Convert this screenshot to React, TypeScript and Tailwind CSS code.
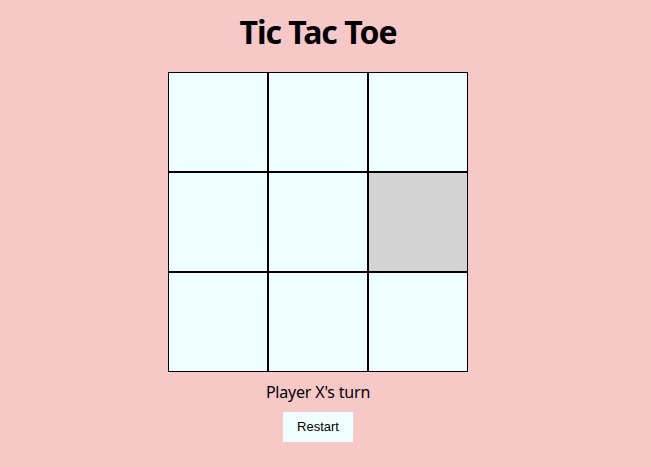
import React from "react";

export default function App() {
  const [board, setBoard] = React.useState<(string | null)[]>(Array(9).fill(null));
  const [player, setPlayer] = React.useState("X");

  const play = (i: number) => {
    if (board[i]) return;
    const next = board.slice();
    next[i] = player;
    setBoard(next);
    setPlayer(player === "X" ? "O" : "X");
  };

  return (
    <div className="min-h-[467px] w-full bg-[#f7c8c8] pr-[15px]">
      <div className="flex flex-col items-center pt-[10px]">
        <h1 className="text-[32px] font-bold leading-[44px] tracking-[-1px] text-black [font-family:'Noto_Sans',sans-serif]">
          Tic Tac Toe
        </h1>
        <div className="mt-[18px] grid grid-cols-[repeat(3,100px)]">
          {board.map((v, i) => (
            <button
              key={i}
              onClick={() => play(i)}
              className={
                "h-[100px] w-[100px] border border-black text-4xl font-bold " +
                (i === 5 ? "bg-[#d3d3d3]" : "bg-[#f0ffff] hover:bg-[#d3d3d3]")
              }
            >
              {v}
            </button>
          ))}
        </div>
        <p className="mt-[9px] text-[16px] leading-[22px] tracking-[-0.2px] text-black [font-family:'Noto_Sans',sans-serif]">
          Player {player}'s turn
        </p>
        <button
          onClick={() => {
            setBoard(Array(9).fill(null));
            setPlayer("X");
          }}
          className="mt-[9px] h-[30px] w-[70px] bg-[#f0ffff] text-[13px] text-black [font-family:'Liberation_Sans',Arial,sans-serif]"
        >
          Restart
        </button>
      </div>
    </div>
  );
}
